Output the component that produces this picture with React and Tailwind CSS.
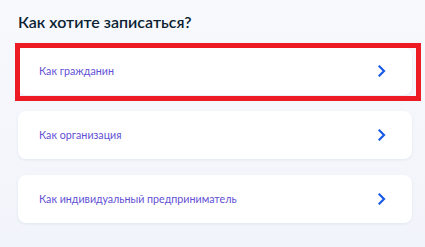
import React from 'react';

const options = ['Как гражданин', 'Как организация', 'Как индивидуальный предприниматель'];

const Chevron = () => (
  <svg width="8" height="12" viewBox="0 0 8 12" fill="none">
    <path d="M1.5 1.5 L6 6 L1.5 10.5" stroke="#1a5ae6" strokeWidth="2.2" strokeLinecap="square" />
  </svg>
);

const OptionCard = ({ label }) => (
  <div className="flex h-12 items-center justify-between rounded-lg bg-white pl-[21px] pr-[26px] shadow-[0_1px_3px_rgba(40,60,120,0.08)]">
    <span className="text-[10.7px] text-[#6150d4]">{label}</span>
    <Chevron />
  </div>
);

export default function App() {
  return (
    <div
      className="h-[247px] w-[425px] bg-gradient-to-b from-[#f8f9fd] to-[#f1f4fa] pl-[18px] pr-[13px] pt-[10px]"
      style={{ fontFamily: 'Lato, "Noto Sans", sans-serif' }}
    >
      <h1 className="text-[16px] font-semibold leading-[24px] text-[#0b1f33]">Как хотите записаться?</h1>
      <div className="mt-[13px] flex flex-col gap-4">
        {options.map((label, i) => (
          <div key={label} className="relative">
            {i === 0 && (
              <div className="pointer-events-none absolute -left-[3px] -right-[9px] -top-[4px] -bottom-[6px] border-[5px] border-[#ed1c24]" />
            )}
            <OptionCard label={label} />
          </div>
        ))}
      </div>
    </div>
  );
}
